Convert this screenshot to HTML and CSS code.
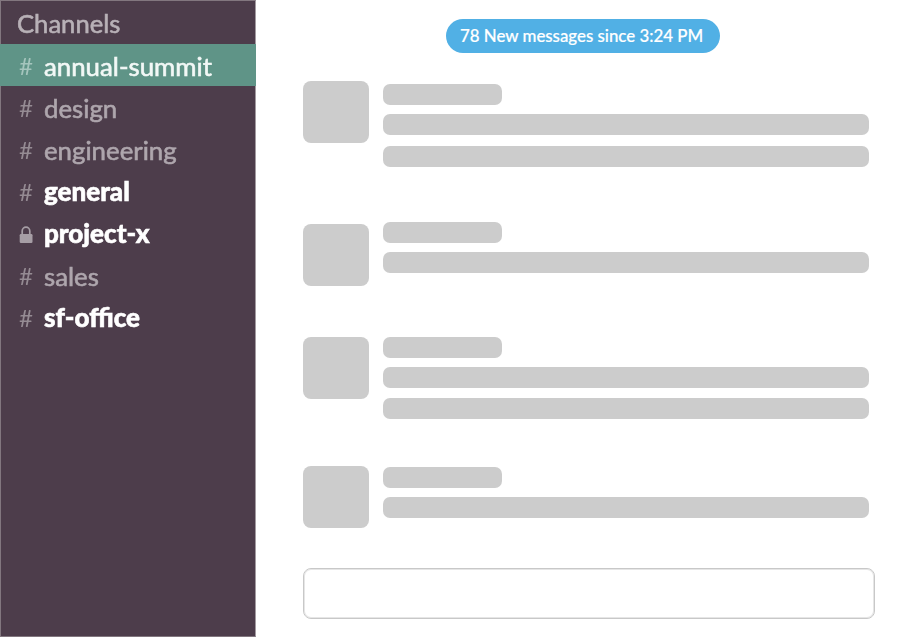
FILE: index.html
```html
<!DOCTYPE html>
<html lang="en">
<head>
<meta charset="utf-8">
<title>Channels</title>
<link rel="stylesheet" href="styles.css">
</head>
<body>
<div class="app">
  <nav class="sidebar">
    <h2 class="heading">Channels</h2>
    <ul class="channels">
      <li class="channel active"><span class="mark">#</span><span class="name">annual-summit</span></li>
      <li class="channel"><span class="mark">#</span><span class="name">design</span></li>
      <li class="channel"><span class="mark">#</span><span class="name">engineering</span></li>
      <li class="channel unread"><span class="mark">#</span><span class="name">general</span></li>
      <li class="channel unread"><span class="mark"><svg class="lock" viewBox="0 0 14 18" width="14" height="18"><path d="M3.2 8V5a3.8 3.8 0 0 1 7.6 0V8" fill="none" stroke="currentColor" stroke-width="1.7"/><rect x="0.7" y="8" width="12.8" height="9" rx="1.2" fill="currentColor"/></svg></span><span class="name">project-x</span></li>
      <li class="channel"><span class="mark">#</span><span class="name">sales</span></li>
      <li class="channel unread"><span class="mark">#</span><span class="name">sf-office</span></li>
    </ul>
  </nav>
  <main class="main">
    <div class="banner"><span class="banner-text">78 New messages since 3:24 PM</span></div>
    <section class="message first">
      <div class="avatar"></div>
      <div class="lines"><div class="bar short"></div><div class="bar"></div><div class="bar wide-gap"></div></div>
    </section>
    <section class="message second">
      <div class="avatar"></div>
      <div class="lines"><div class="bar short"></div><div class="bar"></div></div>
    </section>
    <section class="message third">
      <div class="avatar"></div>
      <div class="lines"><div class="bar short"></div><div class="bar"></div><div class="bar last"></div></div>
    </section>
    <section class="message fourth">
      <div class="avatar"></div>
      <div class="lines"><div class="bar short"></div><div class="bar"></div></div>
    </section>
    <div class="composer"></div>
  </main>
</div>
</body>
</html>
```
FILE: styles.css
```css
* { box-sizing: border-box; }
body { margin: 0; background: #fff; font-family: Lato, "Liberation Sans", sans-serif; }
.app { display: flex; width: 901px; height: 637px; overflow: hidden; }
.sidebar {
  width: 256px;
  height: 637px;
  flex: none;
  background: #4d3d4b;
  border: 1px solid;
  border-color: #82777f #a39ba1 #82777f #82777f;
}
.heading {
  margin: 0;
  height: 43px;
  padding-left: 16px;
  font-size: 25.6px;
  line-height: 45px;
  font-weight: 400;
  color: #b8b1b7;
  -webkit-text-stroke: 0.6px;
  filter: blur(0.5px);
}
.channels { list-style: none; margin: 0; padding: 0; }
.channel {
  height: 42px;
  display: flex;
  align-items: center;
  padding-left: 18px;
  color: #aea6ad;
  font-size: 25.8px;
  line-height: 42px;
  font-weight: 400;
}
.mark { width: 25px; flex: none; padding-top: 1px; font-size: 24px; font-weight: 400; color: #958b93; filter: blur(0.5px); }
.name { white-space: nowrap; padding-top: 1px; -webkit-text-stroke: 0.6px; filter: blur(0.5px); }
.lock { display: block; margin-top: 3px; color: #a69ea5; }
.active { background: #5f9487; margin: 0 -1px 0 -1px; padding-left: 19px; color: #f2f8f6; }
.active .mark { color: #a5c5bd; }
.unread { color: #fff; font-weight: 900; font-size: 26px; }
.unread .name { padding-top: 0; }
.main { width: 645px; flex: none; padding: 19px 0 0 47px; }
.banner {
  width: 274px;
  height: 34px;
  margin-left: 143px;
  padding-left: 14px;
  border-radius: 17px;
  background: #51b0e5;
  color: #fff;
  font-size: 16.85px;
  line-height: 33px;
  font-weight: 500;
  white-space: nowrap;
  -webkit-text-stroke: 0.2px;
}
.message { display: flex; gap: 14px; }
.avatar { width: 66px; height: 62px; border-radius: 8px; background: #ccc; flex: none; }
.lines { display: flex; flex-direction: column; gap: 9px; }
.bar { width: 486px; height: 21px; border-radius: 7px; background: #ccc; }
.short { width: 119px; }
.wide-gap { margin-top: 2px; }
.last { margin-top: 1px; }
.first { height: 86px; margin-top: 28px; }
.first .lines { padding-top: 3px; }
.second { height: 64px; margin-top: 55px; }
.second .avatar { margin-top: 2px; }
.third { height: 82px; margin-top: 51px; }
.fourth { height: 62px; margin-top: 47px; }
.fourth .lines { padding-top: 1px; }
.composer { width: 572px; height: 51px; margin-top: 40px; border: 1px solid #c8c8c8; border-radius: 8px; box-shadow: inset 0 0 0 1px #e6e6e6; }
```
